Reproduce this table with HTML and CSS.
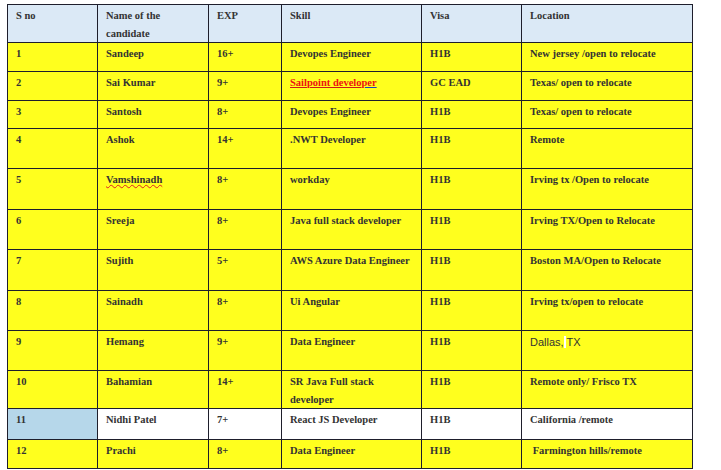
FILE: index.html
```html
<!DOCTYPE html>
<html>
<head>
<meta charset="utf-8">
<link rel="stylesheet" href="styles.css">
</head>
<body>
<table class="grid">
  <colgroup>
    <col class="c-sno"><col class="c-name"><col class="c-exp"><col class="c-skill"><col class="c-visa"><col class="c-loc">
  </colgroup>
  <tr class="head h38"><td>S no</td><td><div class="two">Name of the candidate</div></td><td>EXP</td><td>Skill</td><td>Visa</td><td>Location</td></tr>
  <tr class="h29"><td>1</td><td>Sandeep</td><td>16+</td><td>Devopes Engineer</td><td>H1B</td><td>New jersey /open to relocate</td></tr>
  <tr class="h29"><td>2</td><td>Sai Kumar</td><td>9+</td><td><span class="link">Sailpoint develo</span><span class="link blue">per</span></td><td>GC EAD</td><td>Texas/ open to relocate</td></tr>
  <tr class="h28"><td>3</td><td>Santosh</td><td>8+</td><td>Devopes Engineer</td><td>H1B</td><td>Texas/ open to relocate</td></tr>
  <tr class="h40"><td>4</td><td>Ashok</td><td>14+</td><td>.NWT Developer</td><td>H1B</td><td>Remote</td></tr>
  <tr class="h40"><td>5</td><td><span class="spell">Vamshinadh</span></td><td>8+</td><td>workday</td><td>H1B</td><td>Irving tx /Open to relocate</td></tr>
  <tr class="h40"><td>6</td><td>Sreeja</td><td>8+</td><td>Java full stack developer</td><td>H1B</td><td>Irving TX/Open to Relocate</td></tr>
  <tr class="h40"><td>7</td><td>Sujith</td><td>5+</td><td>AWS Azure Data Engineer</td><td>H1B</td><td>Boston MA/Open to Relocate</td></tr>
  <tr class="h40"><td>8</td><td>Sainadh</td><td>8+</td><td>Ui Angular</td><td>H1B</td><td>Irving tx/open to relocate</td></tr>
  <tr class="h40"><td>9</td><td>Hemang</td><td>9+</td><td>Data Engineer</td><td>H1B</td><td class="sans">Dallas,<span class="hl"> </span>TX</td></tr>
  <tr class="h38"><td>10</td><td>Bahamian</td><td>14+</td><td><div class="two">SR Java Full stack developer</div></td><td>H1B</td><td>Remote only/ Frisco TX</td></tr>
  <tr class="h30 white"><td class="sel">11</td><td>Nidhi Patel</td><td>7+</td><td>React JS Developer</td><td>H1B</td><td>California /remote</td></tr>
  <tr class="h29"><td>12</td><td>Prachi</td><td>8+</td><td>Data Engineer</td><td>H1B</td><td>&nbsp;Farmington hills/remote</td></tr>
</table>
</body>
</html>
```

FILE: styles.css
```css
html, body {
  margin: 0;
  padding: 0;
  background: #ffffff;
}
.grid {
  margin: 4px 0 0 7px;
  border-collapse: collapse;
  table-layout: fixed;
  width: 685px;
  font-family: "Liberation Serif", "Times New Roman", serif;
  font-weight: bold;
  font-size: 10.5px;
  line-height: 18px;
  color: #333333;
}
.c-sno { width: 90px; }
.c-name { width: 111px; }
.c-exp { width: 73px; }
.c-skill { width: 140px; }
.c-visa { width: 100px; }
.c-loc { width: 171px; }
.grid td {
  border: 1.5px solid #1e1e2c;
  background: #ffff1e;
  vertical-align: top;
  padding: 2px 7px 0 8px;
  overflow: hidden;
}
.two {
  height: 34px;
}
.grid tr.head td { background: #dbe9f6; }
.grid tr.white td { background: #ffffff; }
.grid tr.white td.sel { background: #b6d7ea; }
.h28 { height: 28px; }
.h29 { height: 29px; }
.h30 { height: 30.5px; }
.h38 { height: 38px; }
.h40 { height: 40.4px; }
.link {
  color: #ee1111;
  text-decoration: underline;
  text-decoration-color: #d01818;
}
.link.blue { text-decoration-color: #2040c0; }
.spell {
  text-decoration: underline wavy #e02020;
  text-decoration-thickness: 0.6px;
  text-underline-offset: 1px;
}
.sans {
  font-family: "Liberation Sans", Arial, sans-serif;
  font-weight: normal;
  font-size: 11px;
}
.hl { background: #ffffff; }
```
